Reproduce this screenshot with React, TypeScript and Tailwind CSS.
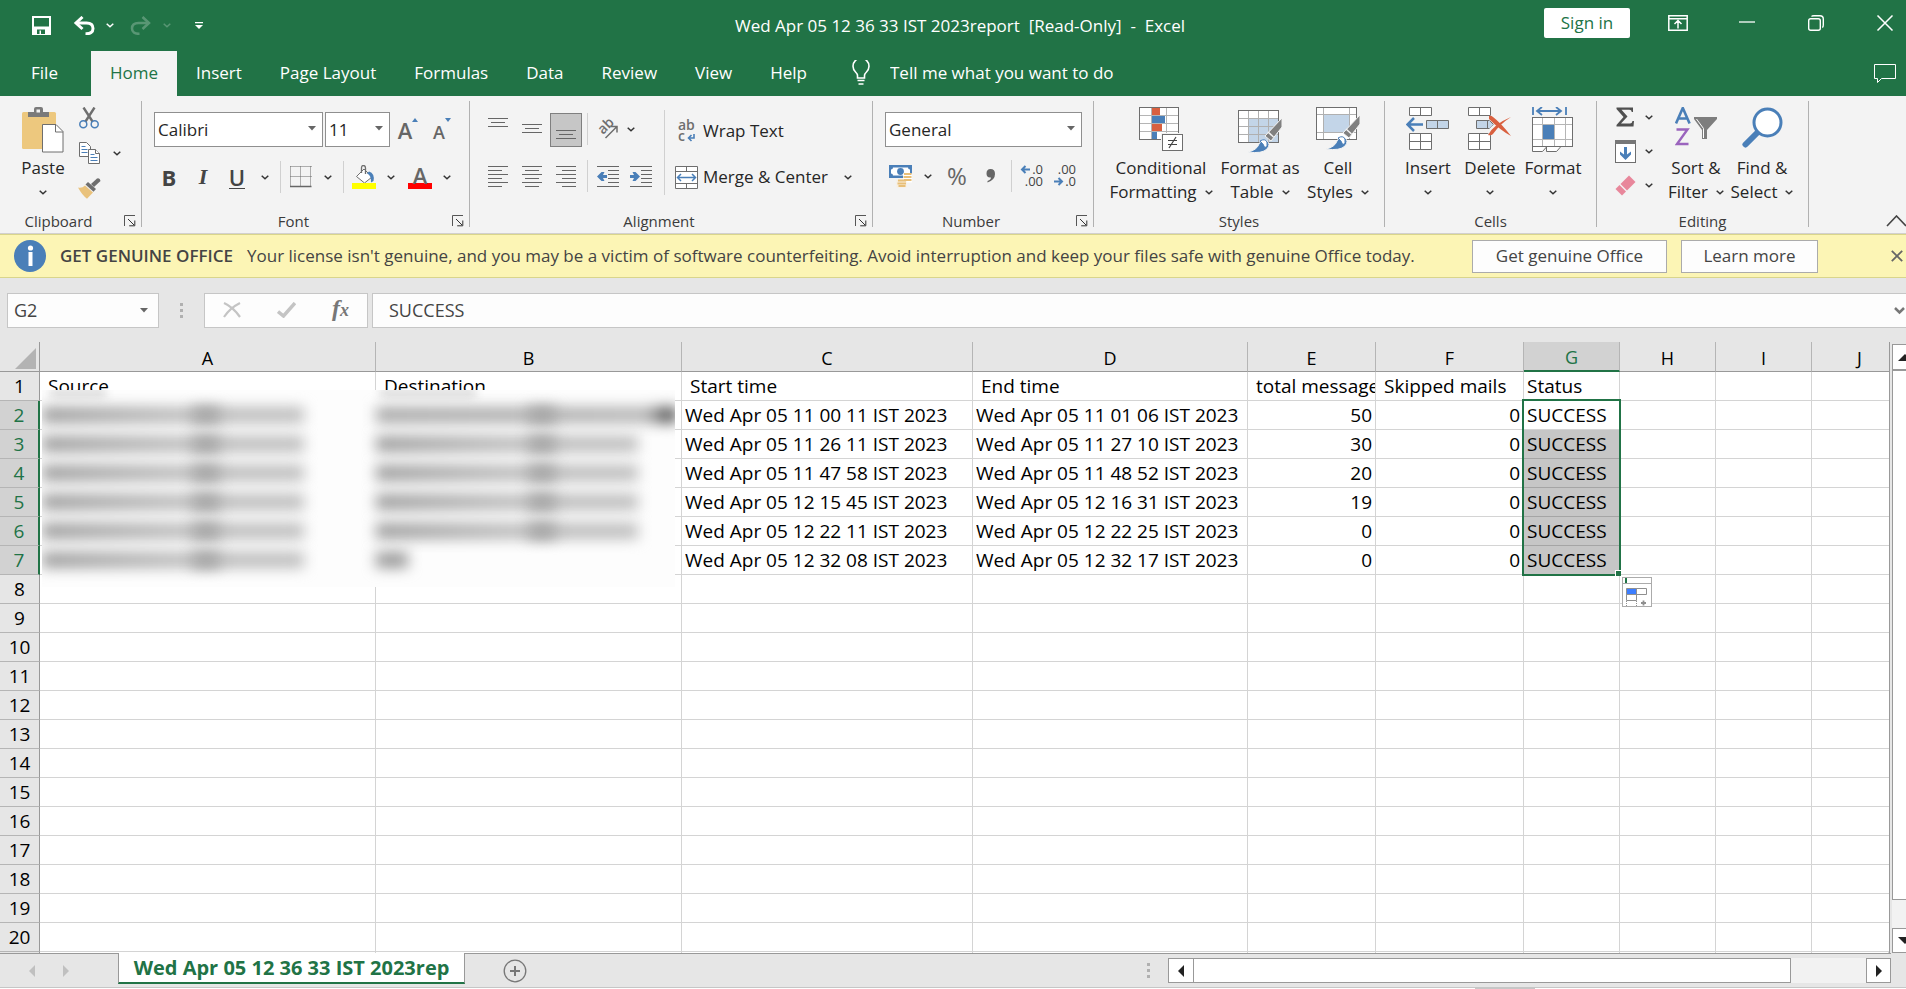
import type { ReactNode } from 'react';
import clsx from 'clsx';

const GRAY = '#6e6e6e';
const BLUE = '#4a7fb8';

const tabs = ['Insert', 'Page Layout', 'Formulas', 'Data', 'Review', 'View', 'Help'];

const columns = [
  { name: 'A', width: 'w-[336px]' },
  { name: 'B', width: 'w-[306px]' },
  { name: 'C', width: 'w-[291px]' },
  { name: 'D', width: 'w-[275px]' },
  { name: 'E', width: 'w-[128px]' },
  { name: 'F', width: 'w-[148px]' },
  { name: 'G', width: 'w-24' },
  { name: 'H', width: 'w-24' },
  { name: 'I', width: 'w-24' },
  { name: 'J', width: '' },
];

const headings = ['Source', 'Destination', 'Start time', 'End time', 'total message', 'Skipped mails', 'Status'];

const records = [
  { start: 'Wed Apr 05 11 00 11 IST 2023', end: 'Wed Apr 05 11 01 06 IST 2023', total: 50, skipped: 0, status: 'SUCCESS' },
  { start: 'Wed Apr 05 11 26 11 IST 2023', end: 'Wed Apr 05 11 27 10 IST 2023', total: 30, skipped: 0, status: 'SUCCESS' },
  { start: 'Wed Apr 05 11 47 58 IST 2023', end: 'Wed Apr 05 11 48 52 IST 2023', total: 20, skipped: 0, status: 'SUCCESS' },
  { start: 'Wed Apr 05 12 15 45 IST 2023', end: 'Wed Apr 05 12 16 31 IST 2023', total: 19, skipped: 0, status: 'SUCCESS' },
  { start: 'Wed Apr 05 12 22 11 IST 2023', end: 'Wed Apr 05 12 22 25 IST 2023', total: 0, skipped: 0, status: 'SUCCESS' },
  { start: 'Wed Apr 05 12 32 08 IST 2023', end: 'Wed Apr 05 12 32 17 IST 2023', total: 0, skipped: 0, status: 'SUCCESS' },
];

const ROWS = 20;

/* ---------- small shared pieces ---------- */

function Chevron({ color = '#333' }: { color?: string }) {
  return (
    <svg width="8" height="5" viewBox="0 0 8 5" fill="none" stroke={color} strokeWidth="1.5">
      <path d="M0.7 0.8 4 3.8 7.3 0.8" />
    </svg>
  );
}

function Triangle() {
  return (
    <svg width="8" height="5" viewBox="0 0 8 5" fill="#666">
      <path d="M0 0h8L4 4.6z" />
    </svg>
  );
}

function ChevronButton({ label, className }: { label: string; className?: string }) {
  return (
    <button aria-label={label} className={clsx('flex h-8 items-center justify-center', className ?? 'w-[22px]')}>
      <Chevron />
    </button>
  );
}

function IconButton({ label, children, className }: { label: string; children: ReactNode; className?: string }) {
  return (
    <button aria-label={label} className={clsx('flex h-8 items-center justify-center', className ?? 'w-[34px]')}>
      {children}
    </button>
  );
}

function Divider() {
  return <div className="mx-1 h-8 w-px bg-[#d0d0d0]" />;
}

function RibbonSelect({ label, value, className }: { label: string; value: string; className: string }) {
  return (
    <div className={clsx('relative h-[35px]', className)}>
      <select
        aria-label={label}
        defaultValue={value}
        className="h-full w-full appearance-none border border-[#8f8f8f] bg-white pl-[3px] text-[17px] text-[#262626]"
      >
        <option>{value}</option>
      </select>
      <span className="pointer-events-none absolute right-[7px] top-[14px]">
        <Triangle />
      </span>
    </div>
  );
}

function Group({ label, launcher, className, children }: { label: string; launcher?: boolean; className: string; children: ReactNode }) {
  return (
    <section className={clsx('flex h-[126px] shrink-0 flex-col border-r border-[#b1b1b1]', className)}>
      <div className="flex flex-1">{children}</div>
      <div className="flex h-3 items-center">
        <span className="flex-1 text-center text-[15px] leading-5 text-[#3b3b3b]">{label}</span>
        {launcher && (
          <button aria-label={`${label} settings`} className="flex w-6 justify-end pr-[5px]">
            <svg width="12" height="12" viewBox="0 0 12 12" fill="none" stroke="#555">
              <path d="M0.5 11V0.5H11" />
              <path d="M4 4l6 6M10.8 5.5v5.3H5.2" stroke="#333" />
            </svg>
          </button>
        )}
      </div>
    </section>
  );
}

function BigButton({ icon, lines, className }: { icon: ReactNode; lines: [string, string?]; className: string }) {
  return (
    <button className={clsx('flex flex-col items-center pt-1.5 text-[17px] leading-6 text-[#262626]', className)}>
      <span className="flex h-[49px] items-start">{icon}</span>
      <span className="whitespace-nowrap">{lines[0]}</span>
      <span className="flex h-6 items-center gap-2 whitespace-nowrap">
        {lines[1]}
        <Chevron />
      </span>
    </button>
  );
}

/* ---------- icons ---------- */

function PasteIcon() {
  return (
    <svg width="42" height="46" viewBox="0 0 42 46">
      <rect x="0" y="5" width="34" height="37" rx="1.5" fill="#edc87e" />
      <path d="M6 5h6V2q0-2 2-2h5q2 0 2 2v3h6v5H6z" fill="#7a7a7a" />
      <rect x="14.500" y="2.500" width="3.500" height="3" fill="#f3f3f3" />
      <path d="M20.500 17.500h13.500l7 7V45H20.500z" fill="#fff" stroke={GRAY} />
      <path d="M33.500 17.500v7.500h7.500" fill="none" stroke={GRAY} />
    </svg>
  );
}

function CutIcon() {
  return (
    <svg width="20" height="22" viewBox="0 0 20 22" fill="none">
      <path d="M4.500 0.500 13.500 14.500M15.500 0.500 6.500 14.500" stroke={GRAY} strokeWidth="2.400" />
      <circle cx="4.300" cy="17.300" r="3.500" stroke={BLUE} strokeWidth="1.500" />
      <circle cx="15.700" cy="17.300" r="3.500" stroke={BLUE} strokeWidth="1.500" />
    </svg>
  );
}

function CopyIcon() {
  return (
    <svg width="21" height="22" viewBox="0 0 21 22" fill="#fff" stroke={GRAY}>
      <path d="M0.500 0.500h7l4 4v10h-11z" />
      <path d="M2.500 4.500h4M2.500 7.500h6M2.500 10.500h6" stroke={BLUE} />
      <path d="M9.500 7.500h7l4 4v10h-11z" />
      <path d="M16.500 7.500v4h4" />
      <path d="M11.500 12.500h4M11.500 15.500h7M11.500 18.500h7" stroke={BLUE} />
    </svg>
  );
}

function PainterIcon() {
  return (
    <svg width="23" height="21" viewBox="0 0 23 21">
      <path d="M0 9.500q4 1 7-2l8 7-6 6.200Q4 17 0 9.500z" fill="#e9c27c" />
      <path d="M7.500 6.500 10 4l8 7-2.500 2.700z" fill={GRAY} />
      <path d="M13 6l6-5.500q3-1 3.500 2.500L16 9z" fill={GRAY} />
    </svg>
  );
}

function BordersIcon() {
  return (
    <svg width="22" height="22" viewBox="0 0 22 22" fill="none" stroke="#666">
      <path d="M0.500 0.500h21M0.500 10.500h21M0.500 0.500v20M10.500 0.500v20M20.500 0.500v20" strokeDasharray="1 1" />
      <path d="M0 20.500h21.500" strokeWidth="1.500" />
    </svg>
  );
}

function FillIcon() {
  return (
    <svg width="24" height="25" viewBox="0 0 24 25">
      <path d="M4.500 11.500 12 4l8 8-7.500 6z" fill="#fff" stroke={GRAY} />
      <path d="M9.500 8V3q0-2.500 2-2.500t2 2.500v6" fill="none" stroke={GRAY} strokeWidth="1.300" />
      <path d="M17 6.500q6 2 4.500 9.500l-2.500 1.500q.5-7-4-9z" fill={BLUE} />
      <rect y="18" width="24" height="6" fill="#ff0" />
    </svg>
  );
}

function LinesIcon({ lines }: { lines: number[][] }) {
  return (
    <svg width="20" height="22" viewBox="0 0 20 22" fill="#666">
      {lines.map(([x, y, w]) => (
        <rect key={y} x={x} y={y} width={w} height="1" />
      ))}
    </svg>
  );
}

function IndentIcon({ increase }: { increase?: boolean }) {
  return (
    <svg width="23" height="22" viewBox="0 0 23 22">
      <path d="M0 1h22v1H0zM11 5h11v1H11zM11 9h11v1H11zM11 13h11v1H11zM11 17h11v1H11zM0 21h22v1H0z" fill="#666" />
      {increase ? (
        <path d="M0 10h4L2.500 7h3l4.500 4.500-4.500 4.500h-3L4 13H0z" fill={BLUE} />
      ) : (
        <path d="M10 10H6l1.500-3h-3L0 11.500l4.500 4.500h3L6 13h4z" fill={BLUE} />
      )}
    </svg>
  );
}

function OrientationIcon() {
  return (
    <svg className="overflow-visible" width="22" height="22" viewBox="0 0 22 22">
      <text x="6" y="17" transform="rotate(-45 6 17)" fontSize="14" fontFamily="Open Sans, sans-serif" fontWeight="600" fill={GRAY}>ab</text>
      <path d="M8.500 20 19.500 9M13.500 8.500h6.500v6" fill="none" stroke={GRAY} strokeWidth="1.500" />
    </svg>
  );
}

function WrapIcon() {
  return (
    <svg className="overflow-visible" width="18" height="23" viewBox="0 0 18 23">
      <text x="0" y="10" fontSize="14" fontFamily="Open Sans, sans-serif" fontWeight="600" fill={GRAY}>ab</text>
      <text x="0" y="21" fontSize="14" fontFamily="Open Sans, sans-serif" fontWeight="600" fill={GRAY}>c</text>
      <path d="M16 14v4h-5M13.500 15l-3 3 3 3" fill="none" stroke={BLUE} strokeWidth="1.600" />
    </svg>
  );
}

function MergeIcon() {
  return (
    <svg width="23" height="23" viewBox="0 0 23 23" fill="#fff" stroke={GRAY}>
      <path d="M0.500 0.500h22v22H0.500zM0.500 5.500h22M0.500 17.500h22M11.500 0.500v5M11.500 17.500v5" />
      <path d="M2.500 11.500h18M6 8l-3.500 3.500L6 15M17 8l3.500 3.500L17 15" fill="none" stroke={BLUE} strokeWidth="1.500" />
    </svg>
  );
}

function MoneyIcon() {
  return (
    <svg width="24" height="24" viewBox="0 0 24 24">
      <rect x="0" y="1" width="23" height="13" fill={BLUE} />
      <path d="M4 3.500h15q0 2 2 2v4q-2 0-2 2H4q0-2-2-2v-4q2 0 2-2z" fill="#fff" />
      <circle cx="11.500" cy="7.500" r="3.400" fill={BLUE} />
      <path d="M14 9.500h9v9h-9z" fill="#fff" />
      <path d="M7.500 15.500h10v8h-10z" fill="#f8efe0" />
      <path d="M15 10h7.500M14.500 13h8M15 16h7.500" stroke="#e8bf78" strokeWidth="2" />
      <path d="M9 16.500h8M8.500 19.500h8.500M9.500 22h7" stroke="#e8bf78" strokeWidth="2" />
    </svg>
  );
}

function DecimalIcon({ increase }: { increase?: boolean }) {
  return (
    <svg className="overflow-visible" width="24" height="24" viewBox="0 0 24 24" fontSize="13" fontFamily="Open Sans, sans-serif" fill="#444">
      {increase ? (
        <>
          <text x="23" y="10" textAnchor="end">.0</text>
          <text x="23" y="22" textAnchor="end">.00</text>
          <path d="M10 5.500H2.500M5.500 2 2 5.500 5.500 9" fill="none" stroke={BLUE} strokeWidth="2" />
        </>
      ) : (
        <>
          <text x="23" y="10" textAnchor="end">.00</text>
          <text x="23" y="22" textAnchor="end">.0</text>
          <path d="M1 17.500h7.500M5.500 14 9 17.500 5.500 21" fill="none" stroke={BLUE} strokeWidth="2" />
        </>
      )}
    </svg>
  );
}

function ConditionalIcon() {
  return (
    <svg width="44" height="45" viewBox="0 0 44 45">
      <rect x="0.500" y="0.500" width="39" height="32" fill="#fff" />
      <path d="M0 8.500h40M0 16.500h40M0 24.500h40M12.500 0v33M27.500 0v33" stroke="#b5b5b5" />
      <rect x="0.500" y="0.500" width="39" height="32" fill="none" stroke={GRAY} />
      <path d="M13 1h8v7h-8zM13 17h10v7H13z" fill="#d9603f" />
      <path d="M13 9h13v7H13zM13 25h5v7h-5z" fill={BLUE} />
      <path d="M22 26h22v19H22z" fill="#f3f3f3" />
      <rect x="23.500" y="27.500" width="20" height="16" fill="#fff" stroke={GRAY} />
      <path d="M29 33.500h9M29 37.500h9M37 30l-7 11" stroke="#444" strokeWidth="1.200" />
    </svg>
  );
}

function Brush() {
  return (
    <>
      <path d="M44 8v9L33 31l-6-5z" fill="#808080" stroke="#f3f3f3" />
      <path d="M30 22l5.500 5" stroke="#f3f3f3" strokeWidth="1.500" />
      <path d="M10 42q9-2 11-8 3-6 8-3 4 3 0 8-5 5-19 3z" fill={BLUE} stroke="#f3f3f3" />
      <path d="M22 31q5-3 7 1 1 4-2 6-2-5-5-7z" fill="#fff" stroke={BLUE} />
    </>
  );
}

function FormatTableIcon() {
  return (
    <svg width="44" height="46" viewBox="0 -3 44 46">
      <rect x="0.500" y="0.500" width="40" height="32" fill="#fff" />
      <path d="M11 9h29v23H11z" fill="#c3d5e8" />
      <path d="M0 8.500h40M0 16.500h40M0 24.500h40M10.500 0v33M20.500 0v33M30.500 0v33" stroke="#b0b0b0" />
      <rect x="0.500" y="0.500" width="40" height="32" fill="none" stroke={GRAY} />
      <Brush />
    </svg>
  );
}

function CellStylesIcon() {
  return (
    <svg width="44" height="46" viewBox="0 0 44 46">
      <rect x="0.500" y="0.500" width="40" height="32" fill="#fff" />
      <path d="M8 8h25v17H8z" fill="#c3d5e8" />
      <path d="M0 7.500h40M0 25.500h40M7.500 0v33M33.500 0v33" stroke="#b0b0b0" />
      <rect x="0.500" y="0.500" width="40" height="32" fill="none" stroke={GRAY} />
      <Brush />
    </svg>
  );
}

function InsertIcon() {
  return (
    <svg width="44" height="44" viewBox="0 0 44 44" fill="#fff" stroke={GRAY}>
      <path d="M3.500 0.500h22v8h-22zM14.500 0.500v8M3.500 26.500h22v16h-22zM14.500 26.500v16M3.500 34.500h22" />
      <path d="M20.500 13.500h22v8h-22zM31.500 13.500v8" fill="#c3d5e8" />
      <path d="M17 17.500H2M8 11l-6.500 6.500L8 24" fill="none" stroke={BLUE} strokeWidth="2.500" />
    </svg>
  );
}

function DeleteIcon() {
  return (
    <svg width="44" height="44" viewBox="0 0 44 44" fill="#fff" stroke={GRAY}>
      <path d="M0.500 0.500h22v8h-22zM11.500 0.500v8M0.500 26.500h22v16h-22zM11.500 26.500v16M0.500 34.500h22" />
      <path d="M8.500 13.500h13l4 4-4 4h-13zM19.500 13.500v8" fill="#c3d5e8" />
      <path d="M22 10q8 5 20 18M42 11Q28 17 21 27" fill="none" stroke="#f3f3f3" strokeWidth="6" />
      <path d="M21 9q2-1 4 1 8 6 18 19Q32 23 21 12zM43 10Q32 17 25 27q-2 2-5 1 6-11 23-18z" fill="#d9603f" stroke="none" />
    </svg>
  );
}

function FormatIcon() {
  return (
    <svg width="42" height="46" viewBox="0 0 42 46">
      <path d="M1 0v8M34 0v8M5 4h24M10 0 5 4l5 4M24 0l5 4-5 4" fill="none" stroke={BLUE} strokeWidth="1.800" />
      <rect x="0.500" y="10.500" width="40" height="29" fill="#fff" />
      <path d="M0 17.500h40M0 32.500h40M10.500 11v28M22.500 11v28M33.500 11v28" stroke="#b5b5b5" />
      <rect x="0.500" y="10.500" width="40" height="29" fill="none" stroke={GRAY} />
      <rect x="11" y="18" width="11" height="14" fill={BLUE} />
      <path d="M0.500 40v4.500h10l4-4.500M14.500 40v4.500h10l4-4.500" fill="#fff" stroke={GRAY} />
    </svg>
  );
}

function SigmaIcon() {
  return (
    <svg width="18" height="20" viewBox="0 0 18 20">
      <path d="M0.500 0.500h16.500v4.500h-1.200q-.3-2.200-2.500-2.200H5.500L11.500 9.500 5 16.500h9q2 0 2.500-2.500H18l-.5 5.500H0.500v-1.500L7.500 10 0.500 2z" fill="#505050" />
    </svg>
  );
}

function FillDownIcon() {
  return (
    <svg width="21" height="23" viewBox="0 0 21 23">
      <rect x="0.500" y="0.500" width="20" height="22" fill="#fff" stroke={GRAY} />
      <rect width="21" height="4" fill="#777" />
      <path d="M9 7h3v7.500l4-3v3L10.500 20 5 14.500v-3l4 3z" fill={BLUE} />
    </svg>
  );
}

function EraserIcon() {
  return (
    <svg width="21" height="21" viewBox="0 0 21 21" fill="#e8879b">
      <path d="M14 0.500 20.500 7 12 15.500 5.500 9z" />
      <path d="M4.500 10 11 16.500 7 20.500 0.500 14z" />
    </svg>
  );
}

function SortFilterIcon() {
  return (
    <svg width="42" height="40" viewBox="0 0 42 40">
      <path d="M1 16.500 7.800 1 14.600 16.500M3.500 11.500h8.500" fill="none" stroke={BLUE} strokeWidth="2.600" />
      <path d="M1.500 22.500h11L2 37h11.500" fill="none" stroke="#9a64bd" strokeWidth="2.400" />
      <path d="M19 10h23v2L32 23v9h-5v-9L19 12z" fill="#7d7d7d" />
      <path d="M21.500 12l7 9.500V31" fill="none" stroke="#fff" />
    </svg>
  );
}

function FindIcon() {
  return (
    <svg width="41" height="41" viewBox="0 0 41 41">
      <path d="M15 26 3.500 37.500" stroke={BLUE} strokeWidth="6" strokeLinecap="round" />
      <circle cx="25.500" cy="15.500" r="13.500" fill="#fff" stroke={BLUE} strokeWidth="3" />
    </svg>
  );
}

/* ---------- window sections ---------- */

function TitleBar() {
  return (
    <header className="grid h-[51px] shrink-0 grid-cols-[1fr_auto_1fr] items-center bg-[#217346] pl-3.5 text-white">
      <div className="flex items-center pl-[18px]">
        <button aria-label="Save">
          <svg width="19" height="19" viewBox="0 0 19 19" fill="#fff">
            <path d="M0 0h19v19H0zM2 2v8.500h15V2zM5 13.500V18h8v-4.500z" fillRule="evenodd" />
            <path d="M7.500 14.500H9V18H7.500z" />
          </svg>
        </button>
        <button aria-label="Undo" className="ml-[22px]">
          <svg width="22" height="19" viewBox="0 0 22 19" fill="none" stroke="#fff" strokeWidth="3">
            <path d="M3 7h10.500q6.500 0 6.500 5.500T12.500 17.800" />
            <path d="M9.500 1 3 7l6.500 6" />
          </svg>
        </button>
        <button aria-label="Undo history" className="ml-[11px]">
          <Chevron color="#fff" />
        </button>
        <button aria-label="Redo" className="ml-4 opacity-25">
          <svg width="22" height="19" viewBox="0 0 22 19" fill="none" stroke="#fff" strokeWidth="2.500">
            <path d="M19 7H8.500Q2 7 2 12.500t7.500 5.300" />
            <path d="M12.500 1 19 7l-6.500 6" />
          </svg>
        </button>
        <button aria-label="Redo history" className="ml-[11px] opacity-25">
          <Chevron color="#fff" />
        </button>
        <button aria-label="Customize Quick Access Toolbar" className="ml-6">
          <svg width="8" height="8" viewBox="0 0 8 8" fill="#fff">
            <path d="M0 0h8v1.200H0zM0 3h8L4 7z" />
          </svg>
        </button>
      </div>
      <h1 className="whitespace-pre text-[17px]">{'Wed Apr 05 12 36 33 IST 2023report  [Read-Only]  -  Excel'}</h1>
      <div className="flex items-center justify-end pb-1.5 pr-[11px]">
        <button className="mr-[38px] h-[30px] w-[86px] rounded-xs bg-white text-[17px] leading-[30px] text-[#217346]">Sign in</button>
        <div className="flex items-center gap-[49px]">
          <button aria-label="Ribbon Display Options">
            <svg width="20" height="16" viewBox="0 0 20 16" fill="none" stroke="#fff" strokeWidth="1.500">
              <path d="M0.800 0.800h18.400v14.400H0.800zM1 3.800h18M10 13.500V6M6.500 9 10 5.500 13.500 9" />
            </svg>
          </button>
          <button aria-label="Minimize">
            <svg width="20" height="16" viewBox="0 0 20 16">
              <path d="M2 7h16" stroke="#fff" strokeWidth="1.300" />
            </svg>
          </button>
          <button aria-label="Restore">
            <svg width="20" height="16" viewBox="0 0 20 16" fill="none" stroke="#fff" strokeWidth="1.400">
              <rect x="2.700" y="3.700" width="11.600" height="11.600" rx="2" />
              <path d="M5.500 1.500Q6 .7 8 .7h6q3.300 0 3.300 3.300v6q0 2-1 2.500" />
            </svg>
          </button>
          <button aria-label="Close">
            <svg width="20" height="16" viewBox="0 0 20 16">
              <path d="M2.500 0.500l15 15M17.500 0.500l-15 15" stroke="#fff" strokeWidth="1.500" />
            </svg>
          </button>
        </div>
      </div>
    </header>
  );
}

function TabBar() {
  return (
    <nav className="flex h-[45px] shrink-0 items-stretch bg-[#217346] text-[17px] text-white">
      <button className="w-[91px] pb-0.5 pr-0.5">File</button>
      <button className="w-[86px] bg-[#f3f3f3] pb-0.5 text-[#217346]">Home</button>
      {tabs.map((tab) => (
        <button key={tab} className="whitespace-nowrap px-[19px] pb-0.5">
          {tab}
        </button>
      ))}
      <label className="flex items-center pb-0.5">
        <svg className="ml-[26px] mr-5" width="18" height="25" viewBox="0 0 18 25" fill="none" stroke="#fff" strokeWidth="1.600">
          <path d="M5.500 18v-2.500Q5.500 14 3.500 12A8 8 0 1 1 14.500 12q-2 2-2 3.500V18zM5.500 20.500h7M6.500 24h5" />
        </svg>
        <input
          aria-label="Tell me what you want to do"
          placeholder="Tell me what you want to do"
          className="w-64 bg-transparent outline-none placeholder:text-white"
        />
      </label>
      <button aria-label="Comments" className="ml-auto pr-2.5">
        <svg width="22" height="20" viewBox="0 0 22 20" fill="none" stroke="#fff">
          <path d="M0.500 0.500h21v14H7.500L3.500 18.500v-4h-3z" />
        </svg>
      </button>
    </nav>
  );
}

function Ribbon() {
  return (
    <div className="flex h-[138px] shrink-0 border-b border-[#d2d0ce] bg-[#f3f3f3] pt-[5px]">
      <Group label="Clipboard" launcher className="w-[142px]">
        <BigButton className="ml-3 w-[62px]" icon={<PasteIcon />} lines={['Paste']} />
        <div className="flex flex-col items-start gap-[3px] pt-px">
          <IconButton label="Cut" className="w-[30px]"><CutIcon /></IconButton>
          <div className="flex">
            <IconButton label="Copy" className="w-[30px]"><CopyIcon /></IconButton>
            <ChevronButton label="Copy options" className="w-[26px]" />
          </div>
          <IconButton label="Format Painter" className="w-[30px]"><PainterIcon /></IconButton>
        </div>
      </Group>

      <Group label="Font" launcher className="w-[328px]">
        <div className="flex flex-col gap-3 pl-2.5 pt-[11px]">
          <div className="flex gap-0.5 pl-0.5">
            <RibbonSelect label="Font" value="Calibri" className="w-[169px]" />
            <RibbonSelect label="Font Size" value="11" className="w-[65px]" />
            <button aria-label="Increase Font Size" className="flex w-8 items-start justify-center pt-1 text-[22px] font-semibold leading-7 text-[#666]">
              A
              <svg className="mt-0.5" width="6" height="4" viewBox="0 0 6 4" fill={BLUE}><path d="M0 4l3-4 3 4z" /></svg>
            </button>
            <button aria-label="Decrease Font Size" className="flex w-8 items-start justify-center pt-1 text-lg font-semibold leading-8 text-[#666]">
              A
              <svg className="mt-0.5" width="6" height="4" viewBox="0 0 6 4" fill={BLUE}><path d="M0 0h6L3 4z" /></svg>
            </button>
          </div>
          <div className="flex pt-px text-[22px] leading-8 text-[#444]">
            <IconButton label="Bold"><b>B</b></IconButton>
            <IconButton label="Italic"><i className="font-['Liberation_Serif'] font-bold">I</i></IconButton>
            <IconButton label="Underline"><span className="h-6 border-b border-[#444] font-semibold leading-6">U</span></IconButton>
            <ChevronButton label="Underline options" />
            <Divider />
            <IconButton label="Borders" className="w-8"><BordersIcon /></IconButton>
            <ChevronButton label="Border options" />
            <Divider />
            <IconButton label="Fill Color" className="w-8"><FillIcon /></IconButton>
            <ChevronButton label="Fill options" />
            <IconButton label="Font Color" className="w-9">
              <span className="h-6 w-6 border-b-6 border-[#f00] text-center font-semibold leading-[20px] text-[#666]">A</span>
            </IconButton>
            <ChevronButton label="Font color options" className="w-[18px]" />
          </div>
        </div>
      </Group>

      <Group label="Alignment" launcher className="w-[403px]">
        <div className="flex flex-col gap-3 pl-[11px] pt-3">
          <div className="flex">
            <IconButton label="Top Align"><LinesIcon lines={[[0, 0, 20], [3, 4, 14], [0, 8, 20]]} /></IconButton>
            <IconButton label="Middle Align"><LinesIcon lines={[[0, 6, 20], [3, 10, 14], [0, 14, 20]]} /></IconButton>
            <button aria-label="Bottom Align" className="mx-px flex h-[34px] w-8 items-center justify-center border border-[#7f7f7f] bg-[#c6c6c6]">
              <LinesIcon lines={[[0, 11, 20], [3, 15, 14], [0, 19, 20]]} />
            </button>
            <Divider />
            <IconButton label="Orientation" className="w-8"><OrientationIcon /></IconButton>
            <ChevronButton label="Orientation options" className="w-3.5" />
          </div>
          <div className="flex pt-px">
            <IconButton label="Align Left"><LinesIcon lines={[[0, 1, 20], [0, 5, 14], [0, 9, 20], [0, 13, 14], [0, 17, 20], [0, 21, 14]]} /></IconButton>
            <IconButton label="Center"><LinesIcon lines={[[0, 1, 20], [3, 5, 14], [0, 9, 20], [3, 13, 14], [0, 17, 20], [3, 21, 14]]} /></IconButton>
            <IconButton label="Align Right"><LinesIcon lines={[[0, 1, 20], [6, 5, 14], [0, 9, 20], [6, 13, 14], [0, 17, 20], [6, 21, 14]]} /></IconButton>
            <Divider />
            <IconButton label="Decrease Indent" className="w-8"><IndentIcon /></IconButton>
            <IconButton label="Increase Indent"><IndentIcon increase /></IconButton>
          </div>
        </div>
        <div className="ml-1.5 mt-[9px] flex h-[85px] flex-col gap-3.5 border-l border-[#d0d0d0] pl-2.5 pt-[5px] text-[17px] text-[#262626]">
          <button className="flex h-8 items-center gap-1">
            <span className="flex w-6 justify-center"><WrapIcon /></span>
            Wrap Text
          </button>
          <div className="flex">
            <button className="flex h-8 items-center gap-1 whitespace-nowrap">
              <span className="flex w-6"><MergeIcon /></span>
              Merge &amp; Center
            </button>
            <ChevronButton label="Merge options" className="w-10" />
          </div>
        </div>
      </Group>

      <Group label="Number" launcher className="w-[221px]">
        <div className="flex flex-col gap-3 pl-3 pt-[11px]">
          <RibbonSelect label="Number Format" value="General" className="w-[197px]" />
          <div className="flex pt-px text-[#666]">
            <IconButton label="Accounting Format" className="w-8"><MoneyIcon /></IconButton>
            <ChevronButton label="Accounting options" />
            <IconButton label="Percent Style" className="w-9"><span className="text-2xl">%</span></IconButton>
            <IconButton label="Comma Style" className="w-8">
              <svg width="10" height="14" viewBox="0 0 10 14" fill="#666">
                <path d="M4.500 0Q9 0 9 5q0 6-7.500 8.500v-1.500Q5 10.500 5 8.500q-4.500.5-4.500-4Q.5 0 4.500 0z" />
              </svg>
            </IconButton>
            <Divider />
            <IconButton label="Increase Decimal" className="w-8"><DecimalIcon increase /></IconButton>
            <IconButton label="Decrease Decimal"><DecimalIcon /></IconButton>
          </div>
        </div>
      </Group>

      <Group label="Styles" className="w-[291px]">
        <div className="flex pl-3">
          <BigButton className="w-[110px]" icon={<ConditionalIcon />} lines={['Conditional', 'Formatting']} />
          <BigButton className="w-[88px]" icon={<FormatTableIcon />} lines={['Format as', 'Table']} />
          <BigButton className="w-[68px]" icon={<CellStylesIcon />} lines={['Cell', 'Styles']} />
        </div>
      </Group>

      <Group label="Cells" className="w-[212px]">
        <div className="flex pl-3">
          <BigButton className="w-[62px]" icon={<InsertIcon />} lines={['Insert']} />
          <BigButton className="w-[62px]" icon={<DeleteIcon />} lines={['Delete']} />
          <BigButton className="w-[64px]" icon={<FormatIcon />} lines={['Format']} />
        </div>
      </Group>

      <Group label="Editing" className="w-[212px]">
        <div className="flex w-[66px] flex-col gap-0.5 pl-3">
          {[
            { label: 'AutoSum', icon: <SigmaIcon /> },
            { label: 'Fill', icon: <FillDownIcon /> },
            { label: 'Clear', icon: <EraserIcon /> },
          ].map(({ label, icon }) => (
            <div key={label} className="flex">
              <IconButton label={label} className="w-8">{icon}</IconButton>
              <ChevronButton label={`${label} options`} className="w-4" />
            </div>
          ))}
        </div>
        <BigButton className="w-[66px]" icon={<SortFilterIcon />} lines={['Sort &', 'Filter']} />
        <BigButton className="w-[66px]" icon={<FindIcon />} lines={['Find &', 'Select']} />
      </Group>

      <button aria-label="Collapse the Ribbon" className="mb-1.5 ml-auto self-end">
        <svg width="20" height="12" viewBox="0 0 20 12" fill="none" stroke="#444" strokeWidth="1.600">
          <path d="M1 11 10.500 1 20 11" />
        </svg>
      </button>
    </div>
  );
}

function LicenseBanner() {
  return (
    <div className="flex h-11 shrink-0 items-center border-y border-[#d9d58c] bg-[#fcf5b5] pl-3.5 pr-[3px] text-[17px] text-[#444]">
      <svg className="shrink-0" width="32" height="32" viewBox="0 0 32 32">
        <circle cx="16" cy="16" r="16" fill={BLUE} />
        <circle cx="16.500" cy="8" r="2.600" fill="#fff" />
        <path d="M14.500 12h4v14h-4z" fill="#fff" />
      </svg>
      <strong className="ml-3.5 whitespace-nowrap font-semibold">GET GENUINE OFFICE</strong>
      <span className="ml-3.5 whitespace-nowrap">
        Your license isn't genuine, and you may be a victim of software counterfeiting. Avoid interruption and keep your files safe with genuine Office today.
      </span>
      <div className="ml-auto flex shrink-0 items-center">
        <button className="h-[33px] w-[195px] border border-[#ababab] bg-[#fdfdfd]">Get genuine Office</button>
        <button className="ml-3.5 h-[33px] w-[137px] border border-[#ababab] bg-[#fdfdfd]">Learn more</button>
        <button aria-label="Dismiss" className="ml-[73px]">
          <svg width="12" height="12" viewBox="0 0 12 12">
            <path d="M0.800 0.800l10.400 10.400M11.200 0.800 0.800 11.200" stroke="#666" strokeWidth="1.800" />
          </svg>
        </button>
      </div>
    </div>
  );
}

function GripDots() {
  return (
    <span className="flex flex-col gap-[3px]">
      <span className="size-[3px] bg-[#b0b0b0]" />
      <span className="size-[3px] bg-[#b0b0b0]" />
      <span className="size-[3px] bg-[#b0b0b0]" />
    </span>
  );
}

function FormulaBar() {
  return (
    <div className="flex h-16 shrink-0 items-center bg-[#e6e6e6] pl-[7px]">
      <div className="relative h-[35px] w-[152px]">
        <input aria-label="Name Box" defaultValue="G2" className="h-full w-full border border-[#c6c6c6] bg-[#fdfdfd] pl-1.5 text-[18px] text-[#444]" />
        <span className="pointer-events-none absolute right-[11px] top-[15px]"><Triangle /></span>
      </div>
      <div className="flex w-[45px] justify-center"><GripDots /></div>
      <div className="flex h-[35px] w-[164px] items-center justify-around border border-[#c6c6c6] bg-[#fdfdfd]">
        <button aria-label="Cancel">
          <svg width="18" height="16" viewBox="0 0 18 16">
            <path d="M1 1q9 4 16 14M17 1Q7 6 1 15" fill="none" stroke="#c4c4c4" strokeWidth="2.200" />
          </svg>
        </button>
        <button aria-label="Enter">
          <svg width="19" height="16" viewBox="0 0 19 16">
            <path d="M1 9.500 6.500 14 18 1" fill="none" stroke="#c4c4c4" strokeWidth="3.500" />
          </svg>
        </button>
        <button aria-label="Insert Function" className="font-['Liberation_Serif'] text-2xl font-bold leading-6 text-[#777]">
          <i>f</i>
          <i className="text-lg">x</i>
        </button>
      </div>
      <div className="relative ml-1 h-[35px] flex-1">
        <input aria-label="Formula Bar" defaultValue="SUCCESS" className="h-full w-full border border-r-0 border-[#c6c6c6] bg-[#fdfdfd] pl-4 text-[18px] text-[#444]" />
        <svg className="pointer-events-none absolute right-px top-[14px]" width="11" height="8" viewBox="0 0 11 8" fill="none" stroke="#777" strokeWidth="2.500">
          <path d="M1 1l4.500 4.500L10 1" />
        </svg>
      </div>
    </div>
  );
}

function SelectionFrame() {
  return (
    <div className="pointer-events-none absolute -left-0.5 -top-0.5 z-10 h-[177px] w-[99px] border-2 border-[#217346]">
      <div className="absolute -bottom-0.5 -right-0.5 size-[6px] border-l border-t border-white bg-[#217346]" />
      <div className="absolute left-[98px] top-[176px] flex h-[30px] w-[30px] flex-col border border-[#ababab] bg-white">
        <div className="h-1.5 border-b border-[#ababab] pl-0.5">
          <div className="h-[5px] w-0.5 bg-[#217346]" />
        </div>
        <svg className="ml-[3px] mt-1" width="23" height="18" viewBox="0 0 23 18" fill="#fff" stroke="#8f8f8f">
          <path d="M10.500 0.500h10v6h-10zM0.500 6.500h10v6H0.500z" />
          <path d="M0.500 0.500h10v6H0.500z" fill="#3d7eff" />
          <path d="M0.500 13v5M10.500 13v5" strokeDasharray="1 1" />
          <path d="M17.500 12.500v5M15 15h5" strokeWidth="1.800" />
        </svg>
      </div>
    </div>
  );
}

function Smudge({ className }: { className: string }) {
  return <div className={clsx('h-4 shrink-0 blur-[7px]', className)} />;
}

const mailShade = 'w-[262px] bg-linear-to-r from-[#9c9c9c] via-[#bababa] to-[#bdbdbd]';

/* Addresses hidden behind a blurred patch */
function RedactedPatch() {
  return (
    <div className="absolute left-[42px] top-12 h-[197px] w-[633px] overflow-hidden bg-[#fdfdfd]">
      <div className="flex h-2.5 items-start gap-[274px] pl-2">
        <div className="h-1.5 w-[56px] shrink-0 bg-[#ccc] blur-[5px]" />
        <div className="h-1.5 w-[96px] shrink-0 bg-[#ccc] blur-[5px]" />
      </div>
      {records.map((record, i) => (
        <div key={record.start} className="relative flex h-[29px] items-center gap-[72px]">
          <Smudge className={mailShade} />
          {i === 0 && <Smudge className="w-[300px] bg-linear-to-r from-[#a8a8a8] via-[#b5b5b5] via-90% to-[#333]" />}
          {i > 0 && i < 5 && <Smudge className={mailShade} />}
          {i === 5 && <Smudge className="w-[32px] bg-[#999]" />}
          <div className="absolute left-[150px] h-4 w-7 bg-[#a5a5a5] blur-[7px]" />
          {i < 5 && <div className="absolute left-[486px] h-4 w-7 bg-[#a5a5a5] blur-[7px]" />}
        </div>
      ))}
    </div>
  );
}

function cellValue(row: number, col: number): string {
  if (row === 1) return headings[col] ?? '';
  const record = records[row - 2];
  if (!record) return '';
  const values = ['', '', record.start, record.end, String(record.total), String(record.skipped), record.status];
  return values[col] ?? '';
}

function Sheet() {
  return (
    <div className="relative min-w-0 flex-1 overflow-hidden border-r border-[#999] bg-white">
      <table className="w-full table-fixed border-separate border-spacing-0 text-[19px] text-black">
        <thead>
          <tr className="h-[30px] bg-[#e6e6e6]">
            <th aria-label="Select all" className="w-10 border-b border-r border-[#999] p-0">
              <svg className="ml-auto mr-[3px] mt-1" width="21" height="21" viewBox="0 0 21 21" fill="#b3b3b3">
                <path d="M21 0v21H0z" />
              </svg>
            </th>
            {columns.map(({ name, width }) => (
              <th
                key={name}
                className={clsx(
                  'border-r p-0 pt-[3px] text-[18px] font-normal leading-[25px]',
                  width,
                  name === 'G'
                    ? 'border-b-2 border-b-[#217346] border-r-[#b5b5b5] bg-[#d2d2d2] text-[#217346]'
                    : 'border-b border-b-[#999] border-r-[#b5b5b5]',
                  name === 'J' && 'border-r-0 pl-[18px]',
                )}
              >
                {name}
              </th>
            ))}
          </tr>
        </thead>
        <tbody>
          {Array.from({ length: ROWS }, (_, i) => i + 1).map((row) => {
            const selected = row >= 2 && row <= 7;
            return (
              <tr key={row} className="h-[29px]">
                <th
                  className={clsx(
                    'border-b border-b-[#b5b5b5] p-0 font-normal leading-7',
                    selected ? 'border-r-2 border-r-[#217346] bg-[#d2d2d2] text-[#217346]' : 'border-r border-r-[#999] bg-[#e6e6e6]',
                  )}
                >
                  {row}
                </th>
                {columns.map(({ name }, col) => (
                  <td
                    key={name}
                    className={clsx(
                      'relative whitespace-nowrap border-b border-r border-[#d4d4d4] p-0 leading-7',
                      row === 1 && col < 6 ? 'pl-2' : 'pl-[3px]',
                      selected && (col === 4 || col === 5) && 'pr-[3px] text-right',
                      selected && row > 2 && name === 'G' && 'border-b-[#a5a5a5] bg-[#c6c6c6]',
                      name === 'J' && 'border-r-0',
                    )}
                  >
                    <div className="h-7 overflow-hidden">{cellValue(row, col)}</div>
                    {row === 2 && name === 'G' && <SelectionFrame />}
                  </td>
                ))}
              </tr>
            );
          })}
          <tr className="h-[29px]">
            <th className="border-r border-[#999] bg-[#e6e6e6]" />
            {columns.map(({ name }) => (
              <td key={name} className="border-r border-[#d4d4d4]" />
            ))}
          </tr>
        </tbody>
      </table>
      <RedactedPatch />
    </div>
  );
}

function VerticalScrollbar() {
  return (
    <div className="flex w-4 shrink-0 flex-col overflow-hidden bg-[#e6e6e6] pl-0.5 pt-0.5">
      <button aria-label="Scroll up" className="flex h-[26px] w-[25px] items-center justify-center border border-[#999] bg-white">
        <svg width="14" height="7" viewBox="0 0 14 7" fill="#222"><path d="M7 0l7 7H0z" /></svg>
      </button>
      <div className="flex flex-1 flex-col bg-[#f2f2f2]">
        <div className="h-[95%] w-[25px] border border-[#999] bg-white" />
      </div>
      <button aria-label="Scroll down" className="flex h-[25px] w-[25px] items-center justify-center border border-[#999] bg-white">
        <svg width="14" height="7" viewBox="0 0 14 7" fill="#222"><path d="M0 0h14L7 7z" /></svg>
      </button>
    </div>
  );
}

function SheetBar() {
  return (
    <footer className="flex h-[34px] shrink-0 bg-[#e6e6e6] pr-[15px]">
      <div className="flex w-[118px] items-center gap-7 border-t border-[#999] pl-[29px]">
        <button aria-label="Previous sheet">
          <svg width="6" height="12" viewBox="0 0 6 12" fill="#c0c0c0"><path d="M6 0v12L0 6z" /></svg>
        </button>
        <button aria-label="Next sheet">
          <svg width="6" height="12" viewBox="0 0 6 12" fill="#c0c0c0"><path d="M0 0v12l6-6z" /></svg>
        </button>
      </div>
      <button className="h-[31px] w-[347px] whitespace-nowrap border-x border-b-2 border-x-[#999] border-b-[#217346] bg-white text-[20px] font-bold leading-7 text-[#217346]">
        Wed Apr 05 12 36 33 IST 2023rep
      </button>
      <div className="flex flex-1 items-center border-t border-[#999] pl-[38px]">
        <button aria-label="New sheet">
          <svg width="24" height="24" viewBox="0 0 24 24" fill="none" stroke="#777">
            <circle cx="12" cy="12" r="10.800" strokeWidth="1.300" />
            <path d="M12 7v10M7 12h10" strokeWidth="2" />
          </svg>
        </button>
        <span className="ml-auto mr-[18px]"><GripDots /></span>
      </div>
      <div className="flex w-[723px] items-center border-t border-[#999]">
        <button aria-label="Scroll left" className="flex h-[25px] w-[26px] items-center justify-center border border-[#999] bg-white">
          <svg width="6" height="12" viewBox="0 0 6 12" fill="#222"><path d="M6 0v12L0 6z" /></svg>
        </button>
        <div className="h-[25px] flex-1 bg-[#f2f2f2] pr-[75px]">
          <div className="h-full border border-l-0 border-[#999] bg-white" />
        </div>
        <button aria-label="Scroll right" className="flex h-[25px] w-[25px] items-center justify-center border border-[#999] bg-white">
          <svg width="6" height="12" viewBox="0 0 6 12" fill="#222"><path d="M0 0v12l6-6z" /></svg>
        </button>
      </div>
    </footer>
  );
}

export default function App() {
  return (
    <div className="flex h-screen flex-col overflow-hidden bg-[#e6e6e6] font-['Open_Sans',sans-serif]">
      <TitleBar />
      <TabBar />
      <Ribbon />
      <LicenseBanner />
      <FormulaBar />
      <main className="flex min-h-0 flex-1">
        <Sheet />
        <VerticalScrollbar />
      </main>
      <SheetBar />
      <div className="flex h-0.5 shrink-0 border-t border-[#c6c6c6] bg-white">
        <div className="ml-auto mr-[371px] w-[60px] bg-[#c6c6c6]" />
      </div>
    </div>
  );
}
